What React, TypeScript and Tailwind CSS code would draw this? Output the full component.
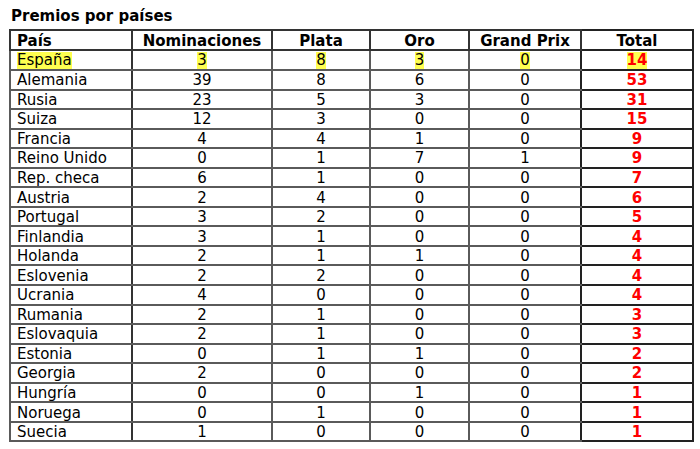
const rows: [string, number, number, number, number, number][] = [
  ["España", 3, 8, 3, 0, 14],
  ["Alemania", 39, 8, 6, 0, 53],
  ["Rusia", 23, 5, 3, 0, 31],
  ["Suiza", 12, 3, 0, 0, 15],
  ["Francia", 4, 4, 1, 0, 9],
  ["Reino Unido", 0, 1, 7, 1, 9],
  ["Rep. checa", 6, 1, 0, 0, 7],
  ["Austria", 2, 4, 0, 0, 6],
  ["Portugal", 3, 2, 0, 0, 5],
  ["Finlandia", 3, 1, 0, 0, 4],
  ["Holanda", 2, 1, 1, 0, 4],
  ["Eslovenia", 2, 2, 0, 0, 4],
  ["Ucrania", 4, 0, 0, 0, 4],
  ["Rumania", 2, 1, 0, 0, 3],
  ["Eslovaquia", 2, 1, 0, 0, 3],
  ["Estonia", 0, 1, 1, 0, 2],
  ["Georgia", 2, 0, 0, 0, 2],
  ["Hungría", 0, 0, 1, 0, 1],
  ["Noruega", 0, 1, 0, 0, 1],
  ["Suecia", 1, 0, 0, 0, 1],
];

const cell = "border-2 border-[#5a5a5a] p-0 pt-px leading-[16px]";

function Mark({ on, children }: { on: boolean; children: React.ReactNode }) {
  return on ? <span className="bg-[#ffff50] inline-block leading-[17px]">{children}</span> : <>{children}</>;
}

export default function App() {
  return (
    <div className="bg-white w-[700px] h-[449px] pt-[6px] pl-[9px] text-black font-['DejaVu_Sans',Verdana,sans-serif] text-[15px]">
      <div className="font-bold leading-[20px] pl-[2px] mb-[3px]">Premios por países</div>
      <table className="border-collapse border-2 border-[#222] table-fixed w-[683px]">
        <colgroup>
          <col className="w-[122px]" />
          <col className="w-[140px]" />
          <col className="w-[98px]" />
          <col className="w-[99px]" />
          <col className="w-[112px]" />
          <col className="w-[112px]" />
        </colgroup>
        <thead>
          <tr className="h-[20px] font-bold">
            <th className={`${cell} border-[#333] text-left pl-[6px]`}>País</th>
            <th className={`${cell} border-[#333]`}>Nominaciones</th>
            <th className={`${cell} border-[#333]`}>Plata</th>
            <th className={`${cell} border-[#333]`}>Oro</th>
            <th className={`${cell} border-[#333]`}>Grand Prix</th>
            <th className={`${cell} border-[#222]`}>Total</th>
          </tr>
        </thead>
        <tbody>
          {rows.map(([name, nom, plata, oro, gp, total], i) => {
            const hl = i === 0;
            return (
              <tr key={name} className="h-[19.55px]">
                <td className={`${cell} border-r-[#333] text-left pl-[6px]`}>
                  <Mark on={hl}>{name}</Mark>
                </td>
                <td className={`${cell} text-center`}>
                  <Mark on={hl}>{nom}</Mark>
                </td>
                <td className={`${cell} text-center`}>
                  <Mark on={hl}>{plata}</Mark>
                </td>
                <td className={`${cell} text-center`}>
                  <Mark on={hl}>{oro}</Mark>
                </td>
                <td className={`${cell} border-r-[#222] text-center`}>
                  <Mark on={hl}>{gp}</Mark>
                </td>
                <td className={`${cell} border-[#222] text-center font-bold text-[#ff0000]`}>
                  <Mark on={hl}>{total}</Mark>
                </td>
              </tr>
            );
          })}
        </tbody>
      </table>
    </div>
  );
}
